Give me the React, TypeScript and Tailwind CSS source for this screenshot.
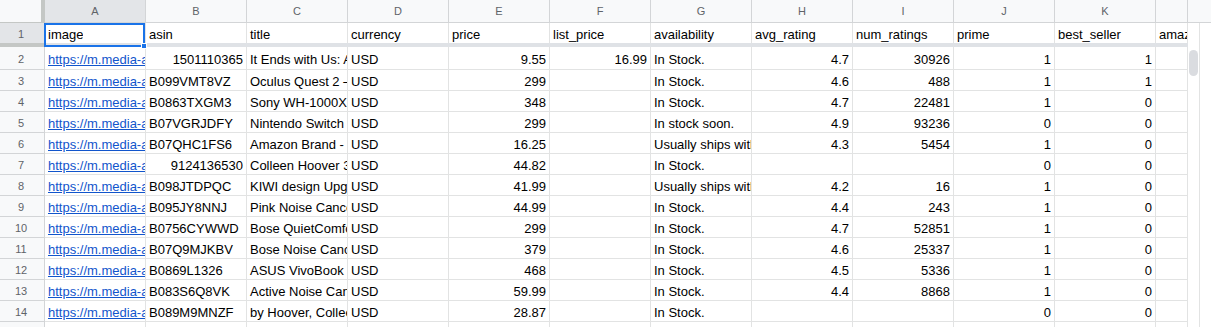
import React from "react";

type Cell = { t: string; r?: boolean; link?: boolean };

const letters = ["A", "B", "C", "D", "E", "F", "G", "H", "I", "J", "K"];

const header = [
  "image",
  "asin",
  "title",
  "currency",
  "price",
  "list_price",
  "availability",
  "avg_rating",
  "num_ratings",
  "prime",
  "best_seller",
  "amazon_choice",
];

const raw: [string, string, string, string, string, string, string, string, string, string][] = [
  ["1501110365", "It Ends with Us: A Novel", "9.55", "16.99", "In Stock.", "4.7", "30926", "1", "1", ""],
  ["B099VMT8VZ", "Oculus Quest 2 — Advanced All-In-One", "299", "", "In Stock.", "4.6", "488", "1", "1", ""],
  ["B0863TXGM3", "Sony WH-1000XM4 Wireless", "348", "", "In Stock.", "4.7", "22481", "1", "0", ""],
  ["B07VGRJDFY", "Nintendo Switch with Neon", "299", "", "In stock soon.", "4.9", "93236", "0", "0", ""],
  ["B07QHC1FS6", "Amazon Brand - Solimo", "16.25", "", "Usually ships within 1 to 3 weeks.", "4.3", "5454", "1", "0", ""],
  ["9124136530", "Colleen Hoover 3 Books Set", "44.82", "", "In Stock.", "", "", "0", "0", ""],
  ["B098JTDPQC", "KIWI design Upgraded Grip", "41.99", "", "Usually ships within 6 to 10 days.", "4.2", "16", "1", "0", ""],
  ["B095JY8NNJ", "Pink Noise Cancelling Headphones", "44.99", "", "In Stock.", "4.4", "243", "1", "0", ""],
  ["B0756CYWWD", "Bose QuietComfort 35 II", "299", "", "In Stock.", "4.7", "52851", "1", "0", ""],
  ["B07Q9MJKBV", "Bose Noise Cancelling Headphones", "379", "", "In Stock.", "4.6", "25337", "1", "0", ""],
  ["B0869L1326", "ASUS VivoBook 15 Thin", "468", "", "In Stock.", "4.5", "5336", "1", "0", ""],
  ["B083S6Q8VK", "Active Noise Cancelling Headphones", "59.99", "", "In Stock.", "4.4", "8868", "1", "0", ""],
  ["B089M9MNZF", "by Hoover, Colleen It Ends", "28.87", "", "In Stock.", "", "", "0", "0", ""],
];

const isNum = (s: string) => /^[0-9.]+$/.test(s);

const rows: Cell[][] = raw.map((r) => [
  { t: "https://m.media-amazon.com/images/I/81s0B6NYXML.jpg", link: true },
  { t: r[0], r: isNum(r[0]) },
  { t: r[1] },
  { t: "USD" },
  { t: r[2], r: true },
  { t: r[3], r: true },
  { t: r[4] },
  { t: r[5], r: true },
  { t: r[6], r: true },
  { t: r[7], r: true },
  { t: r[8], r: true },
  { t: r[9] },
]);

function CellBox({ c, last }: { c: Cell; last?: boolean }) {
  return (
    <div
      className={
        (last ? "w-[32px] " : "w-[101px] ") +
        "shrink-0 h-full border-r border-b border-[#e2e3e3] overflow-hidden whitespace-nowrap flex items-center pt-[3px] leading-[15px] " +
        (c.r ? "justify-end pr-[3px] " : "justify-start pl-[3px] ")
      }
    >
      {c.link ? (
        <span className="text-[#1155cc] underline">{c.t}</span>
      ) : (
        <span className="text-black">{c.t}</span>
      )}
    </div>
  );
}

export default function App() {
  return (
    <div className="w-[1211px] h-[327px] overflow-hidden bg-white flex font-['Liberation_Sans',Arial,sans-serif] text-[13px]">
      <div className="w-[1188px] shrink-0 flex flex-col">
        {/* column letters */}
        <div className="flex h-[23px] shrink-0">
          <div className="w-[45px] shrink-0 bg-[#f8f9fa] border-r-4 border-r-[#c4c7c5] border-b border-b-[#c4c7c5]" />
          {letters.map((l) => (
            <div
              key={l}
              className={
                (l === "A" ? "bg-[#e3e5e8] " : "bg-[#f8f9fa] ") +
                "w-[101px] shrink-0 border-r border-b border-[#d3d5d7] flex items-center justify-center text-[11px] text-[#5f6368]"
              }
            >
              {l}
            </div>
          ))}
          <div className="w-[32px] shrink-0 bg-[#f8f9fa] border-r border-b border-[#d3d5d7]" />
        </div>
        {/* row 1 */}
        <div className="flex h-[20px] shrink-0">
          <div className="w-[45px] shrink-0 bg-[#e3e5e8] border-r border-[#c4c7c5] flex items-center justify-center text-[11px] text-[#5f6368] pr-[2px] pt-[3px] leading-[13px]">
            1
          </div>
          {header.map((h, i) => (
            <div
              key={h}
              className={
                (i === header.length - 1 ? "w-[32px] " : "w-[101px] ") +
                "shrink-0 h-full border-r border-[#e2e3e3] whitespace-nowrap flex items-center pl-[3px] pt-[3px] leading-[15px] text-black relative " +
                (i === 0 ? "" : "overflow-hidden")
              }
            >
              {i === 0 ? (
                <>
                  <span className="overflow-hidden">{h}</span>
                  <div className="absolute left-[-1px] top-0 w-[101px] h-[24px] border-2 border-[#1a73e8] z-10 pointer-events-none" />
                  <div className="absolute left-[96px] top-[20px] w-[6px] h-[6px] bg-[#1a73e8] border border-white z-20" />
                </>
              ) : (
                h
              )}
            </div>
          ))}
        </div>
        {/* frozen bar */}
        <div className="flex h-[4px] shrink-0">
          <div className="w-[45px] shrink-0 bg-[#c4c7c5]" />
          <div className="flex-1 bg-[#dfe2e6]" />
        </div>
        {/* data rows */}
        {rows.map((r, ri) => (
          <div key={ri} className={(ri === 0 ? "h-[23px] " : "h-[21px] ") + "flex shrink-0"}>
            <div className="w-[45px] shrink-0 bg-[#f8f9fa] border-r border-b border-[#d3d5d7] flex items-center justify-center text-[11px] text-[#5f6368] pr-[2px] pt-[3px] leading-[13px]">
              {ri + 2}
            </div>
            {r.map((c, ci) => (
              <CellBox key={ci} c={c} last={ci === r.length - 1} />
            ))}
          </div>
        ))}
        {/* partial row 15 */}
        <div className="flex h-[21px] shrink-0">
          <div className="w-[45px] shrink-0 bg-[#f8f9fa] border-r border-[#d3d5d7]" />
          {letters.map((l) => (
            <div key={l} className="w-[101px] shrink-0 border-r border-[#e2e3e3]" />
          ))}
          <div className="w-[32px] shrink-0 border-r border-[#e2e3e3]" />
        </div>
      </div>
      {/* scrollbar */}
      <div className="w-[23px] shrink-0 flex flex-col">
        <div className="h-[23px] shrink-0 bg-[#f8f9fa] border-b border-[#d3d5d7]" />
        <div className="flex-1 flex">
          <div className="w-[12px] border-r border-[#e2e3e3] bg-white pt-[27px] pl-[1px]">
            <div className="w-[9px] h-[26px] rounded-full bg-[#dadce0]" />
          </div>
        </div>
      </div>
    </div>
  );
}
